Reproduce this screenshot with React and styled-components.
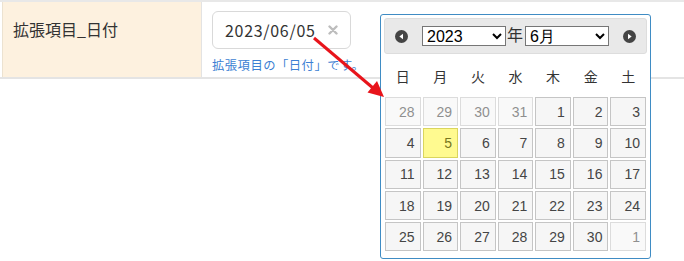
import React from "react";
import styled, { createGlobalStyle } from "styled-components";

const GlobalStyle = createGlobalStyle`
  html, body { margin: 0; padding: 0; background: #fff; }
  body { font-family: "Noto Sans CJK JP", "Noto Sans", sans-serif; }
`;

const Page = styled.div`
  position: relative;
  width: 684px;
  height: 261px;
  overflow: hidden;
  background: #fff;
`;

const FormRow = styled.div`
  display: flex;
  height: 79px;
  box-sizing: border-box;
  border-top: 2px solid #e8e8e8;
  border-bottom: 2px solid #e4e4e4;
`;

const LabelCell = styled.div`
  width: 200px;
  margin-left: 2px;
  box-sizing: border-box;
  padding: 15px 0 0 10px;
  background: #fdf1df;
  border-left: 1px solid #ece2d0;
  border-right: 1px solid #e3e3e3;
  color: #333;
  font-size: 16px;
  line-height: 24px;
`;

const ValueCell = styled.div`
  padding: 9px 0 0 10px;
  display: flex;
  flex-direction: column;
`;

const DateInput = styled.div`
  width: 139px;
  height: 38px;
  box-sizing: border-box;
  border: 1px solid #d9d9d9;
  border-radius: 6px;
  display: flex;
  align-items: center;
  justify-content: space-between;
  padding: 0 12px 0 12px;
  color: #333;
  font-size: 16px;
  letter-spacing: 0.7px;
`;

const Hint = styled.div`
  margin-top: 8px;
  color: #3d7fd3;
  font-size: 12.3px;
  letter-spacing: 0.5px;
  line-height: 17px;
  white-space: nowrap;
`;

const Popup = styled.div`
  position: absolute;
  left: 380px;
  top: 14px;
  width: 271px;
  height: 245px;
  box-sizing: border-box;
  border: 1px solid #3f8cc4;
  border-radius: 3px;
  background: #fff;
  padding: 3px 3px 0 3px;
  display: flex;
  flex-direction: column;
`;

const Header = styled.div`
  height: 36px;
  box-sizing: border-box;
  border: 1px solid #dddddd;
  border-radius: 3px;
  background: #e9e9e9;
  display: flex;
  align-items: center;
  padding: 0 10px 0 10px;
`;

const Title = styled.div`
  flex: 1;
  display: flex;
  align-items: center;
  justify-content: center;
  font-size: 16px;
  color: #333;
`;

const Select = styled.select`
  width: 84px;
  height: 20px;
  box-sizing: border-box;
  font-family: "Liberation Sans", Arial, sans-serif;
  font-size: 16px;
  color: #000;
  padding: 0;
  margin: 0;
  background: #fff;
`;

const Nen = styled.span`
  padding: 0 2px 0 1px;
  line-height: 20px;
  margin-top: -4px;
`;

const WeekRow = styled.div`
  display: grid;
  grid-template-columns: repeat(7, 1fr);
  column-gap: 2px;
  margin: 0 1px;
  height: 43px;
  align-items: center;
`;

const WeekDay = styled.div`
  text-align: center;
  font-size: 14px;
  color: #333;
`;

const Grid = styled.div`
  display: grid;
  grid-template-columns: repeat(7, 1fr);
  grid-auto-rows: 29.3px;
  gap: 2px;
  margin: 0 1px;
`;

const Day = styled.div`
  box-sizing: border-box;
  border: 1px solid ${(p) => (p.$today ? "#dad55e" : "#c5c5c5")};
  background: ${(p) => (p.$today ? "#fffa90" : "#f6f6f6")};
  color: ${(p) => (p.$today ? "#777620" : "#454545")};
  opacity: ${(p) => (p.$other ? 0.6 : 1)};
  font-family: "Liberation Sans", Arial, sans-serif;
  font-size: 14px;
  padding-right: 5px;
  display: flex;
  align-items: center;
  justify-content: flex-end;
`;

const Overlay = styled.svg`
  position: absolute;
  left: 0;
  top: 0;
  pointer-events: none;
`;

const NavIcon = ({ dir }) => (
  <svg width="13" height="13" viewBox="0 0 13 13">
    <circle cx="6.5" cy="6.5" r="6.5" fill="#444" />
    {dir === "prev" ? (
      <polygon points="4.3,6.5 8,3.8 8,9.2" fill="#fff" />
    ) : (
      <polygon points="8.7,6.5 5,3.8 5,9.2" fill="#fff" />
    )}
  </svg>
);

const ClearIcon = () => (
  <svg width="10" height="10" viewBox="0 0 10 10">
    <path d="M1.5 1.5 L8.5 8.5 M8.5 1.5 L1.5 8.5" stroke="#bdbdbd" strokeWidth="2.4" strokeLinecap="round" />
  </svg>
);

const weeks = [
  [[28, 1], [29, 1], [30, 1], [31, 1], [1], [2], [3]],
  [[4], [5, 0, 1], [6], [7], [8], [9], [10]],
  [[11], [12], [13], [14], [15], [16], [17]],
  [[18], [19], [20], [21], [22], [23], [24]],
  [[25], [26], [27], [28], [29], [30], [1, 1]],
];

export default function App() {
  return (
    <Page>
      <GlobalStyle />
      <FormRow>
        <LabelCell>拡張項目_日付</LabelCell>
        <ValueCell>
          <DateInput>
            <span>2023/06/05</span>
            <ClearIcon />
          </DateInput>
          <Hint>拡張項目の「日付」です。</Hint>
        </ValueCell>
      </FormRow>

      <Popup>
        <Header>
          <NavIcon dir="prev" />
          <Title>
            <Select defaultValue="2023">
              <option value="2023">2023</option>
            </Select>
            <Nen>年</Nen>
            <Select defaultValue="6">
              <option value="6">6月</option>
            </Select>
          </Title>
          <NavIcon dir="next" />
        </Header>
        <WeekRow>
          {["日", "月", "火", "水", "木", "金", "土"].map((d) => (
            <WeekDay key={d}>{d}</WeekDay>
          ))}
        </WeekRow>
        <Grid>
          {weeks.flat().map(([n, other, today], i) => (
            <Day key={i} $other={!!other} $today={!!today}>
              {n}
            </Day>
          ))}
        </Grid>
      </Popup>

      <Overlay width="684" height="261">
        <line x1="314" y1="38" x2="373" y2="88" stroke="#e8141b" strokeWidth="3" />
        <polygon points="384,97 367.5,92.5 377,81" fill="#e8141b" />
      </Overlay>
    </Page>
  );
}
